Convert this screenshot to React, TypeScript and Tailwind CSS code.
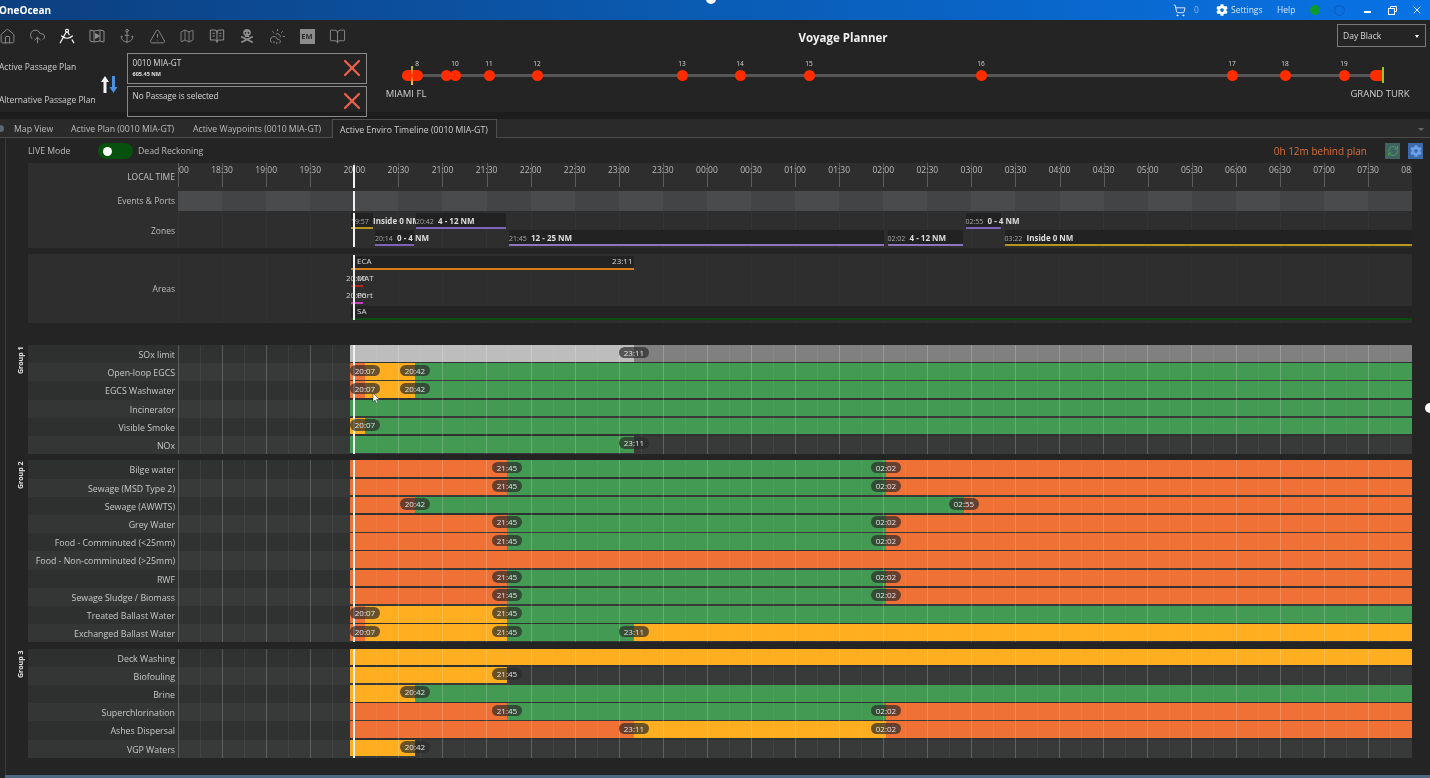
// Voyage Planner - enviro timeline view
import React from "react";
import {
  House,
  CloudUpload,
  DraftingCompass,
  Anchor,
  TriangleAlert,
  Map as MapIcon,
  BookOpen,
  BookOpenText,
  CloudSunRain,
  ShoppingCart,
  X,
  RefreshCw,
} from "lucide-react";
import { FaCog, FaSkullCrossbones } from "react-icons/fa";

const TRACK_LEFT = 178;
const BAR_START = 349.5;
const NOW_X = 353;

// colours of the row bars
const G = "#439a52";
const O = "#f07136";
const Y = "#ffae1f";
const L = "#bdbdbd";
const M = "#808080";

// time marks (x in page coordinates)
const T2007 = 365;
const T2042 = 415;
const T2145 = 507;
const T2311 = 634;
const T0202 = 886;
const T0255 = 964;
const END = 1412;

const pillText: Record<number, string> = {
  [T2007]: "20:07",
  [T2042]: "20:42",
  [T2145]: "21:45",
  [T2311]: "23:11",
  [T0202]: "02:02",
  [T0255]: "02:55",
};

interface Segment {
  to: number;
  color: string | null;
}

interface Row {
  label: string;
  segments: Segment[];
  pills: number[];
}

const bilge = (label: string): Row => ({
  label,
  segments: [
    { to: T2145, color: O },
    { to: T0202, color: G },
    { to: END, color: O },
  ],
  pills: [T2145, T0202],
});

const groups: { name: string; rows: Row[] }[] = [
  {
    name: "Group 1",
    rows: [
      { label: "SOx limit", segments: [{ to: T2311, color: L }, { to: END, color: M }], pills: [T2311] },
      { label: "Open-loop EGCS", segments: [{ to: T2007, color: O }, { to: T2042, color: Y }, { to: END, color: G }], pills: [T2007, T2042] },
      { label: "EGCS Washwater", segments: [{ to: T2007, color: O }, { to: T2042, color: Y }, { to: END, color: G }], pills: [T2007, T2042] },
      { label: "Incinerator", segments: [{ to: END, color: G }], pills: [] },
      { label: "Visible Smoke", segments: [{ to: T2007, color: Y }, { to: END, color: G }], pills: [T2007] },
      { label: "NOx", segments: [{ to: T2311, color: G }, { to: END, color: null }], pills: [T2311] },
    ],
  },
  {
    name: "Group 2",
    rows: [
      bilge("Bilge water"),
      bilge("Sewage (MSD Type 2)"),
      { label: "Sewage (AWWTS)", segments: [{ to: T2042, color: O }, { to: T0255, color: G }, { to: END, color: O }], pills: [T2042, T0255] },
      bilge("Grey Water"),
      bilge("Food - Comminuted (<25mm)"),
      { label: "Food - Non-comminuted (>25mm)", segments: [{ to: END, color: O }], pills: [] },
      bilge("RWF"),
      bilge("Sewage Sludge / Biomass"),
      { label: "Treated Ballast Water", segments: [{ to: T2007, color: O }, { to: T2145, color: Y }, { to: END, color: G }], pills: [T2007, T2145] },
      { label: "Exchanged Ballast Water", segments: [{ to: T2007, color: O }, { to: T2145, color: Y }, { to: T2311, color: G }, { to: END, color: Y }], pills: [T2007, T2145, T2311] },
    ],
  },
  {
    name: "Group 3",
    rows: [
      { label: "Deck Washing", segments: [{ to: END, color: Y }], pills: [] },
      { label: "Biofouling", segments: [{ to: T2145, color: Y }, { to: END, color: null }], pills: [T2145] },
      { label: "Brine", segments: [{ to: T2042, color: Y }, { to: END, color: G }], pills: [T2042] },
      bilge("Superchlorination"),
      { label: "Ashes Dispersal", segments: [{ to: T2311, color: O }, { to: T0202, color: Y }, { to: END, color: O }], pills: [T2311, T0202] },
      { label: "VGP Waters", segments: [{ to: T2042, color: Y }, { to: END, color: null }], pills: [T2042] },
    ],
  },
];

const timeLabels = [
  "18:00", "18:30", "19:00", "19:30", "20:00", "20:30", "21:00", "21:30", "22:00", "22:30",
  "23:00", "23:30", "00:00", "00:30", "01:00", "01:30", "02:00", "02:30", "03:00", "03:30",
  "04:00", "04:30", "05:00", "05:30", "06:00", "06:30", "07:00", "07:30", "08:00",
];

const stops = [
  { x: 446, n: "" },
  { x: 455, n: "10" },
  { x: 489, n: "11" },
  { x: 537, n: "12" },
  { x: 682, n: "13" },
  { x: 740, n: "14" },
  { x: 809, n: "15" },
  { x: 981, n: "16" },
  { x: 1232, n: "17" },
  { x: 1285, n: "18" },
  { x: 1344, n: "19" },
];

// quarter hour grid, every second line is stronger
function GridLines({ strong, faint }: { strong: string; faint: string }) {
  return (
    <div className="absolute inset-0 flex pointer-events-none">
      {Array.from({ length: 56 }).map((_, i) => (
        <div key={i} className={`flex-1 border-l ${i % 2 === 0 ? strong : faint}`} />
      ))}
    </div>
  );
}

function NowLine() {
  return (
    <div
      className="absolute top-0 bottom-0 w-[2px] bg-[#f1f1f1]"
      style={{ left: NOW_X - TRACK_LEFT }}
    />
  );
}

function GanttRow({ row, index }: { row: Row; index: number }) {
  let from = BAR_START;
  return (
    <div className="flex h-[18.2px]">
      <div
        className={`w-[150px] shrink-0 pr-[3px] pt-[2px] text-right text-[8.8px] leading-[16px] whitespace-nowrap text-[#c9c9c9] ${
          index % 2 === 0 ? "bg-[#2e2f2f]" : "bg-[#343636]"
        }`}
      >
        {row.label}
      </div>
      <div className={`relative w-[1234px] shrink-0 ${index % 2 === 0 ? "bg-[#303131]" : "bg-[#383a3a]"}`}>
        <div className="absolute inset-x-0 top-0 h-[16.6px] flex">
          <div style={{ width: BAR_START - TRACK_LEFT }} />
          {row.segments.map((s) => {
            const width = s.to - from;
            from = s.to;
            return <div key={s.to} style={{ width, backgroundColor: s.color ?? "transparent" }} />;
          })}
        </div>
        <GridLines strong="border-white/20" faint="border-white/[0.06]" />
        <NowLine />
        {row.pills.map((p) => (
          <div
            key={p}
            className="absolute top-[1.5px] h-[11.5px] w-[30px] rounded-full bg-[#2b2b2b]/70 text-center text-[8px] leading-[11.5px] text-[#e3e3e3]"
            style={{ left: p - TRACK_LEFT - 15 }}
          >
            {pillText[p]}
          </div>
        ))}
      </div>
    </div>
  );
}

function ZoneBar(props: {
  left: number;
  right: number;
  top: number;
  color: string;
  time: string;
  text: string;
}) {
  const { left, right, top, color, time, text } = props;
  return (
    <div
      className="absolute h-[16px] bg-[#222222] border-b-2 whitespace-nowrap leading-[10px] text-[#a9a9a9]"
      style={{ left: left - TRACK_LEFT, width: right - left, top, borderColor: color }}
    >
      <span className="inline-block w-[17px] text-[7px]">{time}</span>
      <span className="ml-[5px] text-[8px] font-bold text-[#dedede]">{text}</span>
    </div>
  );
}

function AreaBar(props: {
  left: number;
  right: number;
  top: number;
  color: string;
  text: string;
  end?: string;
  dark?: boolean;
}) {
  const { left, right, top, color, text, end, dark = true } = props;
  return (
    <div
      className={`absolute h-[14px] border-b-2 whitespace-nowrap flex justify-between pl-[6px] pr-[1px] text-[8px] leading-[9px] text-[#dcdcdc] ${
        dark ? "bg-[#232323]" : ""
      }`}
      style={{ left: left - TRACK_LEFT, width: right - left, top, borderColor: color }}
    >
      <span>{text}</span>
      {end && <span>{end}</span>}
    </div>
  );
}

function ToolIcon({ children }: { children: React.ReactNode }) {
  return <div className="w-[30px] h-[18px] flex items-center justify-center text-[#8c8c8c]">{children}</div>;
}

function PlanBox({ title, sub }: { title: string; sub?: string }) {
  return (
    <div className="relative w-[240px] h-[31px] border border-[#8a8a8a] pl-[5px] pt-[3px]">
      <div className="text-[8.2px] leading-[11px] text-[#d8d8d8]">{title}</div>
      {sub && <div className="mt-[2px] text-[5.5px] font-bold leading-[8px] text-[#e0e0e0]">{sub}</div>}
      <X className="absolute right-[0px] top-[0px] text-[#e8604c]" size={28} strokeWidth={2} />
    </div>
  );
}

export default function App() {
  return (
    <div
      className="relative w-[1430px] h-[778px] overflow-hidden bg-[#242424] text-[#d0d0d0] blur-[0.35px]"
      style={{ fontFamily: '"Open Sans", "Liberation Sans", sans-serif' }}
    >
      {/* Title bar */}
      <div className="h-5 flex items-center bg-gradient-to-r from-[#0c3f7f] via-[#0a5cb4] to-[#0873e6] text-white">
        <div className="text-[10px] font-bold -ml-[1px]">OneOcean</div>
        <div className="ml-auto flex items-center text-[8.5px] text-[#d5e6fa]">
          <ShoppingCart size={13} strokeWidth={1.5} className="text-white" />
          <span className="ml-[8px] w-[22px] text-[#8fb6e8]">0</span>
          <FaCog size={12} className="text-white" />
          <span className="ml-[3px] w-[46px]">Settings</span>
          <span className="w-[33px]">Help</span>
          <div className="h-[10px] w-[10px] rounded-full bg-[#0f9a2e]" />
          <div className="ml-[14px] h-[11px] w-[11px] rounded-full border border-[#0a5cc0]" />
          <div className="ml-[19px] h-[1.5px] w-[7px] mt-[4px] bg-white" />
          <svg className="ml-[17px]" width="9" height="9" viewBox="0 0 9 9" fill="none" stroke="white" strokeWidth="1">
            <path d="M2.5 2V.5h6v5H7" />
            <rect x=".5" y="2.5" width="6" height="6" />
          </svg>
          <X className="ml-[14px] mr-[7px]" size={12} strokeWidth={2} />
        </div>
      </div>

      {/* Header */}
      <div className="relative h-[92px]">
        <div className="flex items-start pt-[7px] -ml-[8px]">
          <ToolIcon><House size={17} strokeWidth={1.4} /></ToolIcon>
          <ToolIcon><CloudUpload size={17} strokeWidth={1.4} /></ToolIcon>
          <ToolIcon><DraftingCompass size={18} strokeWidth={1.6} className="text-white" /></ToolIcon>
          <ToolIcon>
            <svg width="16" height="16" viewBox="0 0 16 16" fill="none" stroke="currentColor" strokeWidth="1">
              <path d="M1 2l4 1 6-1 4 1v11l-4-1-6 1-4-1z" />
              <path d="M5 3v11M11 2v11" />
              <path d="M6.5 5.5l4 2.5-4 2.5z" fill="currentColor" />
            </svg>
          </ToolIcon>
          <ToolIcon><Anchor size={16} strokeWidth={1.4} /></ToolIcon>
          <ToolIcon><TriangleAlert size={17} strokeWidth={1.3} /></ToolIcon>
          <ToolIcon><MapIcon size={16} strokeWidth={1.3} /></ToolIcon>
          <ToolIcon><BookOpenText size={16} strokeWidth={1.6} /></ToolIcon>
          <ToolIcon><FaSkullCrossbones size={14} /></ToolIcon>
          <ToolIcon><CloudSunRain size={17} strokeWidth={1.3} /></ToolIcon>
          <ToolIcon>
            <div className="w-[15px] h-[15px] bg-[#8c8c8c] text-[#2c2c2c] text-center text-[7.5px] font-bold leading-[15px]">EM</div>
          </ToolIcon>
          <ToolIcon><BookOpen size={17} strokeWidth={1.3} /></ToolIcon>
        </div>
        <div className="absolute left-[743px] top-[9px] w-[200px] text-center text-[11.5px] font-bold text-[#f1f1f1]">
          Voyage Planner
        </div>
        <div className="absolute right-[4px] top-[4px] w-[89px] h-[23px] border border-[#7a7a7a] flex items-center justify-between pl-[5px] pr-[6px] pt-[1px] text-[8.5px] text-[#d8d8d8]">
          Day Black
          <div className="border-x-[2.5px] border-t-[3px] border-x-transparent border-t-white" />
        </div>

        {/* Passage plans */}
        <div className="absolute left-0 top-[33px] flex">
          <div className="w-[101px] -ml-[1px] flex flex-col text-[8.5px] text-[#cfcfcf]">
            <div className="h-[33px] pt-[8px] leading-[11px] whitespace-nowrap">Active Passage Plan</div>
            <div className="h-[33px] pt-[8px] leading-[11px] whitespace-nowrap">Alternative Passage Plan</div>
          </div>
          <svg className="mt-[22px]" width="20" height="19" viewBox="0 0 20 19">
            <path d="M5 1l4 6H6.5v11h-3V7H1z" fill="#f2f2f2" />
            <path d="M12 1h3v11h2.5L13.5 18 9.5 12H12z" fill="#4f8fe0" />
          </svg>
          <div className="ml-[6.5px] flex flex-col gap-[2px]">
            <PlanBox title="0010 MIA-GT" sub="605.45 NM" />
            <PlanBox title="No Passage is selected" />
          </div>
        </div>

        {/* Route: stops sit at their own place along the line */}
        <div className="absolute left-0 top-[55px] w-full h-[0px]">
          <div className="absolute left-[405px] w-[975px] top-[-1.5px] h-[3.5px] bg-[#565656]" />
          <div className="absolute left-[402px] top-[-5px] w-[21px] h-[10.5px] rounded-full bg-[#ff2c00]" />
          <div className="absolute left-[410.5px] top-[-9px] w-[2px] h-[19px] bg-gradient-to-b from-[#9ccc3c] via-[#ff2c00] to-[#e8d24a]" />
          <div className="absolute left-[414px] top-[-15px] w-[6px] text-center text-[6.5px] leading-[8px] text-[#d8d8d8]">8</div>
          {stops.map((s) => (
            <React.Fragment key={s.x}>
              <div
                className="absolute top-[-5px] w-[10.5px] h-[10.5px] rounded-full bg-[#ff2c00]"
                style={{ left: s.x - 5 }}
              />
              <div
                className="absolute top-[-15px] w-[20px] text-center text-[6.5px] leading-[8px] text-[#d8d8d8]"
                style={{ left: s.x - 10 }}
              >
                {s.n}
              </div>
            </React.Fragment>
          ))}
          <div className="absolute left-[1370px] top-[-5px] w-[12px] h-[10.5px] rounded-l-full bg-[#ff2c00]" />
          <div className="absolute left-[1381.5px] top-[-8px] w-[2px] h-[16px] bg-[#8fd017]" />
          <div className="absolute left-[376px] top-[13px] w-[60px] text-center text-[9.5px] leading-[11px] text-[#d0d0d0]">MIAMI FL</div>
          <div className="absolute left-[1340px] top-[13px] w-[80px] text-center text-[9.5px] leading-[11px] text-[#d0d0d0]">GRAND TURK</div>
        </div>
      </div>

      <div className="h-[7px] bg-[#1d1d1d]" />

      {/* Tabs */}
      <div className="relative h-[19px] flex bg-[#2a2a2a] border-b border-[#4a4a4a] text-[8.7px] leading-[21px] text-[#bdbdbd]">
        <div className="absolute -left-[3px] top-[6px] h-[7px] w-[7px] rounded-full bg-[#5b6772]" />
        <div className="pl-[14px] w-[71px]">Map View</div>
        <div className="w-[122px] whitespace-nowrap">Active Plan (0010 MIA-GT)</div>
        <div className="w-[139px] whitespace-nowrap">Active Waypoints (0010 MIA-GT)</div>
        <div className="w-[165px] h-[19px] bg-[#242424] border border-b-0 border-[#4f4f4f] pl-[7px] leading-[20px] whitespace-nowrap text-[#cfcfcf]">
          Active Enviro Timeline (0010 MIA-GT)
        </div>
        <div className="absolute right-[6px] top-[9px] border-x-[3px] border-t-[3px] border-x-transparent border-t-[#666]" />
      </div>

      {/* Content */}
      <div className="ml-[5px] h-[637px] border-l border-[#3b3b3b]">
        {/* Live bar */}
        <div className="relative h-[25px] flex items-center pt-[1px] text-[8.7px] text-[#bcbcbc]">
          <div className="ml-[22px] mt-[1px] w-[70px]">LIVE Mode</div>
          <div className="w-[35px] h-[16px] rounded-full bg-[#07500d] flex items-center pl-[5px]">
            <div className="w-[9px] h-[9px] rounded-full bg-white" />
          </div>
          <div className="ml-[5px] mt-[1px]">Dead Reckoning</div>
          <div className="ml-auto flex items-center">
            <div className="mt-[1px] text-[10px] text-[#d8703a]">0h 12m behind plan</div>
            <div className="ml-[18px] w-[15px] h-[16px] bg-[#3f6360] flex items-center justify-center text-[#4f9a5c]">
              <RefreshCw size={12} strokeWidth={2} />
            </div>
            <div className="ml-[8px] mr-[7px] w-[15px] h-[16px] bg-[#3d6aa8] flex items-center justify-center text-[#6da0ea]">
              <FaCog size={12} />
            </div>
          </div>
        </div>

        <div className="pl-[22px]">
          {/* Time, events, zones */}
          <div className="w-[1384px] h-[85px] bg-[#2e2e2e]">
            <div className="flex h-[28px]">
              <div className="w-[150px] shrink-0 pr-[3px] pt-[8px] text-right text-[8.5px] leading-[12px] text-[#c2c2c2]">LOCAL TIME</div>
              <div className="relative w-[1234px] overflow-hidden">
                <div className="absolute inset-0 flex">
                  {timeLabels.slice(0, 28).map((t, i) => (
                    <div key={t} className="relative flex-1">
                      <div className="absolute left-0 top-0 h-[24px] w-[1px] bg-[#5d5d5d]" />
                      <div className="absolute left-[-15px] top-[1px] w-[30px] text-center text-[8.5px] leading-[12px] text-[#b9b9b9]">
                        {t}
                      </div>
                      {i === 27 && (
                        <div className="absolute left-[29px] top-[1px] w-[30px] text-center text-[8.5px] leading-[12px] text-[#b9b9b9]">
                          08:00
                        </div>
                      )}
                    </div>
                  ))}
                </div>
                <div className="absolute top-[2px] bottom-[3px] w-[2px] bg-[#f1f1f1]" style={{ left: NOW_X - TRACK_LEFT }} />
              </div>
            </div>

            <div className="flex h-[20px]">
              <div className="w-[150px] shrink-0 pr-[3px] text-right text-[8.5px] leading-[20px] text-[#bdbdbd]">Events &amp; Ports</div>
              <div className="relative w-[1234px] flex">
                {Array.from({ length: 28 }).map((_, i) => (
                  <div key={i} className={`flex-1 ${i % 2 === 0 ? "bg-[#4a4b4c]" : "bg-[#424445]"}`} />
                ))}
                <NowLine />
              </div>
            </div>

            <div className="flex h-[37px]">
              <div className="w-[150px] shrink-0 pr-[3px] pb-[2px] text-right text-[8.5px] leading-[39px] text-[#bdbdbd]">Zones</div>
              <div className="relative w-[1234px]">
                <GridLines strong="border-white/[0.03]" faint="border-transparent" />
                <ZoneBar left={351} right={373} top={2} color="#b8951d" time="19:57" text="Inside 0 NM" />
                <ZoneBar left={416} right={506} top={2} color="#7d62b8" time="20:42" text="4 - 12 NM" />
                <ZoneBar left={965.5} right={1001} top={2} color="#7d62b8" time="02:55" text="0 - 4 NM" />
                <ZoneBar left={375} right={414} top={19} color="#7d62b8" time="20:14" text="0 - 4 NM" />
                <ZoneBar left={509} right={884} top={19} color="#8d76bd" time="21:45" text="12 - 25 NM" />
                <ZoneBar left={887.5} right={963} top={19} color="#8d76bd" time="02:02" text="4 - 12 NM" />
                <ZoneBar left={1004.5} right={1412} top={19} color="#b8951d" time="03:22" text="Inside 0 NM" />
                <div className="absolute top-[2px] bottom-[1px] w-[2px] bg-[#f1f1f1]" style={{ left: NOW_X - TRACK_LEFT }} />
              </div>
            </div>
          </div>

          {/* Areas */}
          <div className="mt-[6px] w-[1384px] h-[69px] flex bg-[#2e2e2e]">
            <div className="w-[150px] shrink-0 pr-[3px] text-right text-[8.5px] leading-[69px] text-[#bdbdbd]">Areas</div>
            <div className="relative w-[1234px]">
              <GridLines strong="border-white/[0.025]" faint="border-transparent" />
              <AreaBar left={351} right={633.5} top={2} color="#d87c1a" text="ECA" end="23:11" />
              <AreaBar left={351} right={363} top={19} color="#b3261a" text="MAT" dark={false} />
              <AreaBar left={351} right={363} top={36} color="#c63fc0" text="Port" dark={false} />
              <div className="absolute left-[168px] top-[19px] text-[8px] leading-[9px] text-[#cfcfcf]">20:00</div>
              <div className="absolute left-[168px] top-[36px] text-[8px] leading-[9px] text-[#cfcfcf]">20:00</div>
              <AreaBar left={351} right={1412} top={52} color="#0d4a12" text="SA" />
              <div className="absolute top-[1px] bottom-[3px] w-[2px] bg-[#f1f1f1]" style={{ left: NOW_X - TRACK_LEFT }} />
            </div>
          </div>

          {/* Groups */}
          <div className="mt-[22px] flex flex-col gap-[6.3px]">
            {groups.map((g) => (
              <div key={g.name} className="flex -ml-[14px]">
                <div className="w-[14px] shrink-0 flex justify-center">
                  <div className="h-[30px] mt-[2px] [writing-mode:vertical-rl] rotate-180 text-[7px] font-bold leading-[14px] text-right text-[#e6e6e6] whitespace-nowrap">
                    {g.name}
                  </div>
                </div>
                <div className="w-[1384px]">
                  {g.rows.map((r, i) => (
                    <GanttRow key={r.label} row={r} index={i} />
                  ))}
                </div>
              </div>
            ))}
          </div>
        </div>
      </div>

      <div className="ml-[5px] h-[5px] bg-[#4e6783]" />

      {/* Overlays from the screen recording */}
      <div className="absolute left-[706px] -top-[6px] h-[10px] w-[10px] rounded-full bg-white" />
      <div className="absolute left-[1425px] top-[403px] h-[10px] w-[10px] rounded-full bg-white" />
      <svg className="absolute left-[372px] top-[393px]" width="8" height="11" viewBox="0 0 8 11">
        <path d="M1 0v9l2-2 1.5 3.5 1.5-.6L4.5 6.5H7.5z" fill="white" stroke="#222" strokeWidth=".5" />
      </svg>
    </div>
  );
}
